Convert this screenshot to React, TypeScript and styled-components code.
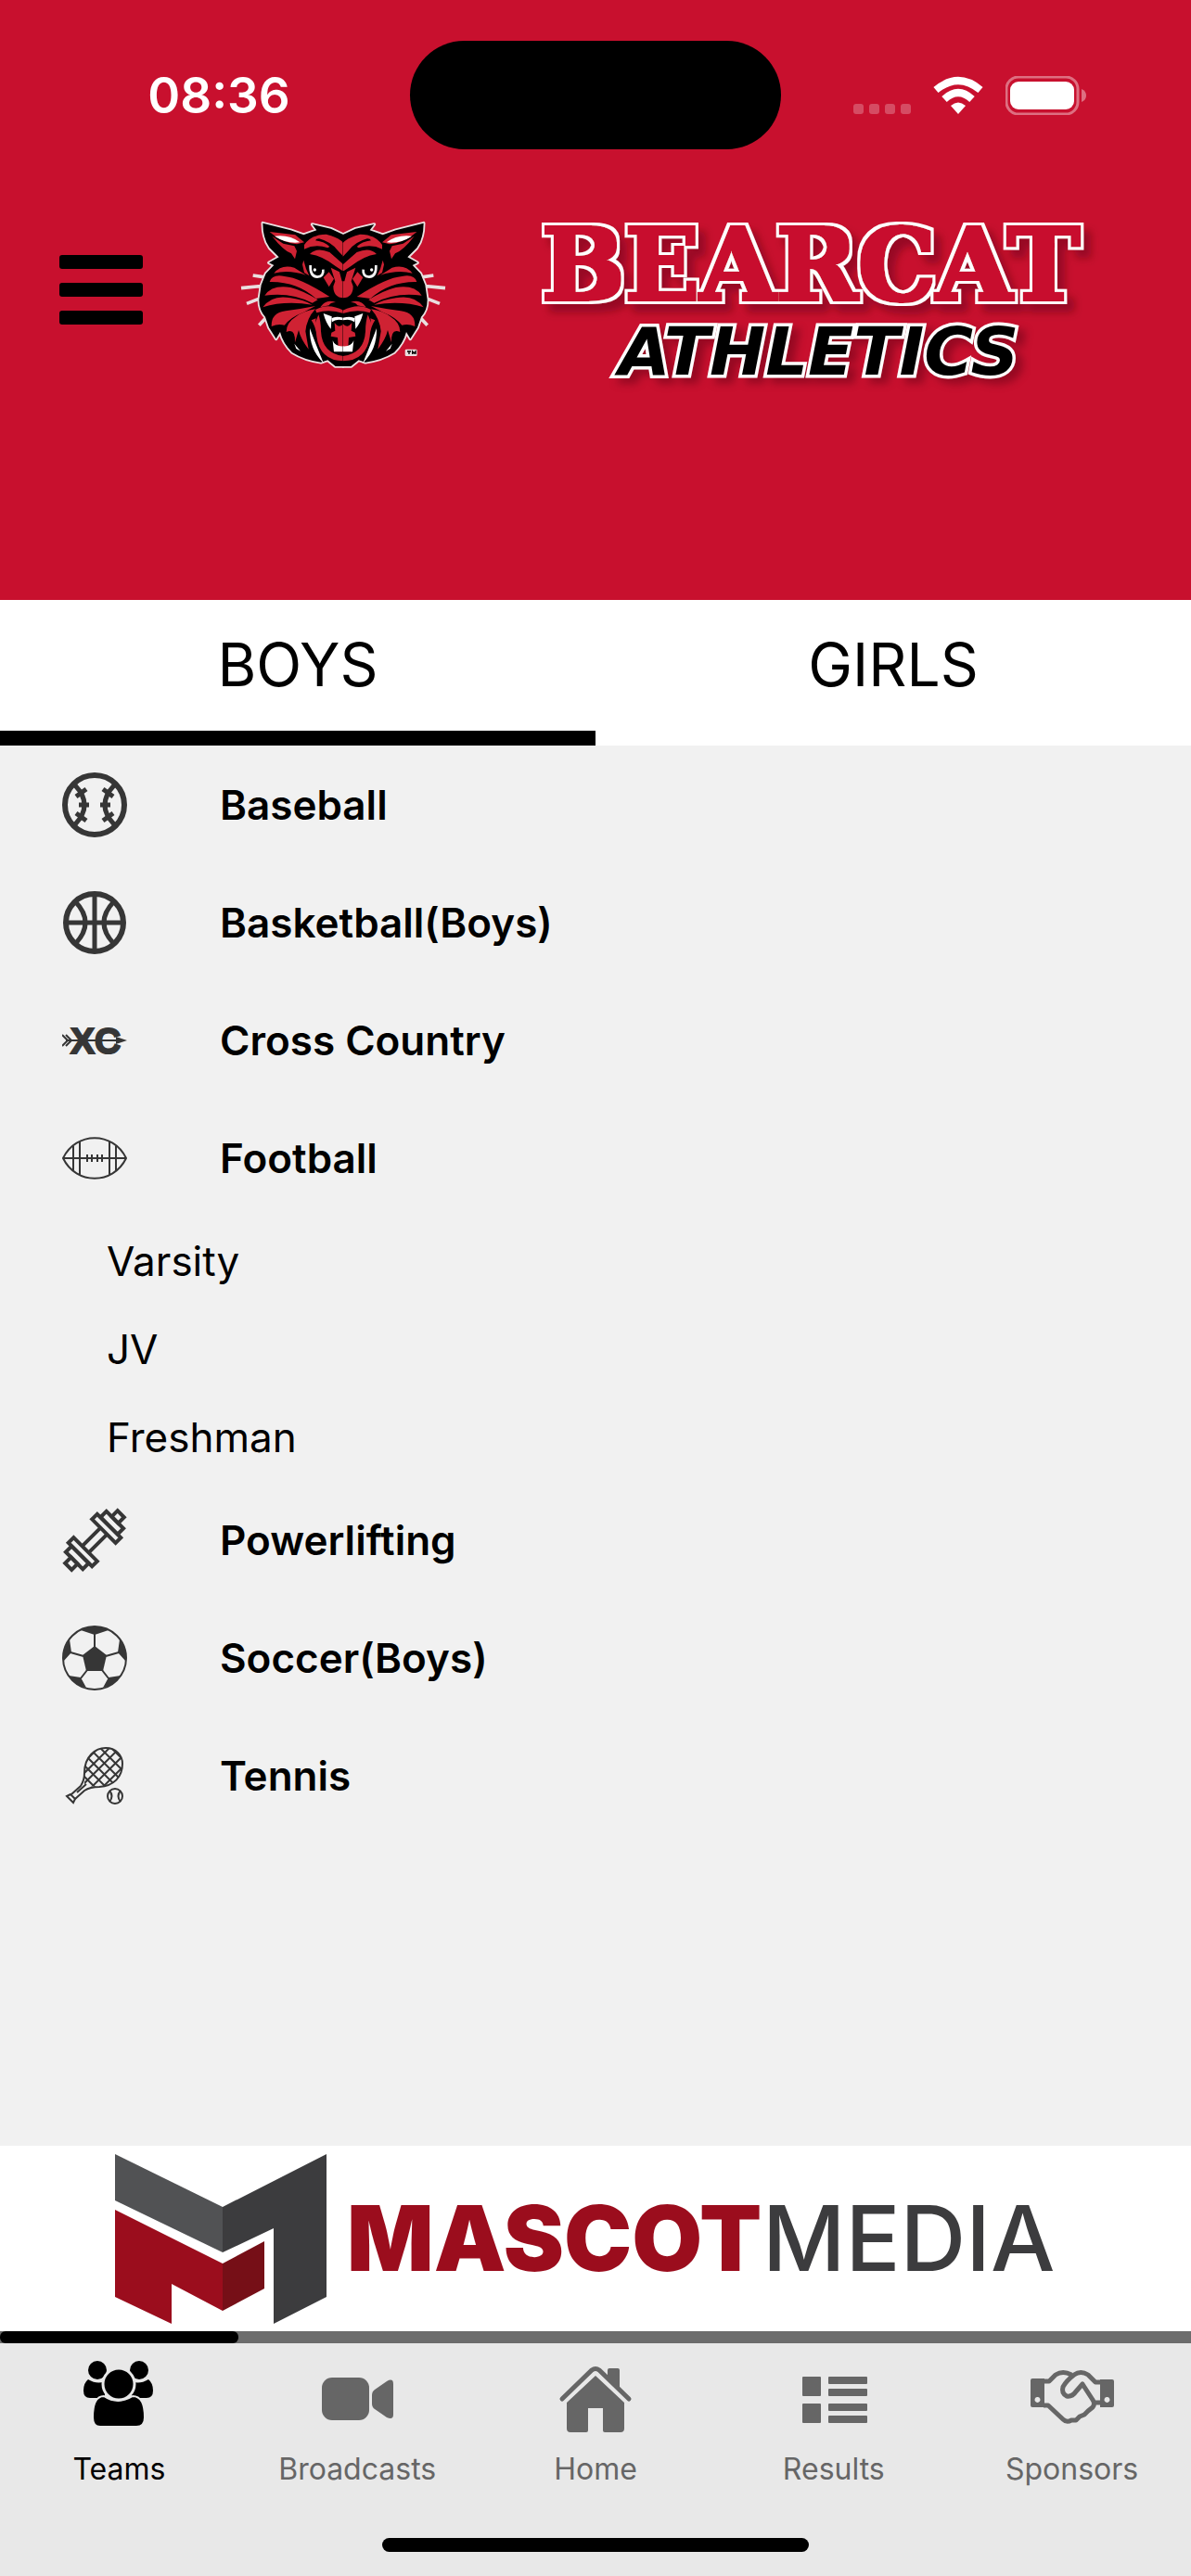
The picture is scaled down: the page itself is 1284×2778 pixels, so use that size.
import React, { useState } from "react";
import styled, { createGlobalStyle } from "styled-components";

const RED = "#c8102e";
const INK = "#363636";

const BearcatLogo = () => {
  const half = (
    <>
      <path
        d="M392 100L350 80L290 66L304 85L262 100L220 85L130 62Q130 112 152 142L182 172L150 190L166 198L140 225L125 262L118 310Q118 345 138 365L150 400L173 436L186 414Q195 450 225 480Q265 505 318 512L340 505L365 525H392Z"
        fill="#000"
      />
      <g fill="#cf2233">
        <path d="M152 90L235 100L264 124L240 130Q190 124 152 90Z" />
        <path d="M160 104L196 128L232 136L240 152L234 178L222 160Q196 150 160 104Z" />
        <path d="M264 132Q288 98 335 98Q375 108 391 126V170L372 150Q350 122 312 112Q302 112 300 118Q330 122 346 138L340 142Q300 128 264 146Z" />
        <path d="M282 162Q304 138 346 156L380 186L391 196V218L366 202Q324 168 282 162Z" />
        <path d="M262 182L270 210L280 232L264 222L258 196Z" />
        <path d="M350 206L378 220L386 250H391V304Q358 302 358 266L364 250Z" />
        <path d="M326 238L344 220L360 242L344 268Z" />
        <path d="M166 224Q190 194 232 206L270 230Q214 212 166 224Z" />
        <path d="M152 252Q160 226 200 234Q250 238 346 300L302 306Q240 250 152 252Z" />
        <path d="M136 296Q160 260 220 270Q260 280 308 310L290 320Q220 284 136 296Z" />
        <path d="M130 334Q160 292 220 304Q262 310 290 326Q200 312 130 334Z" />
        <path d="M158 396Q156 352 204 346Q250 340 300 330L262 350Q220 366 200 392Q180 386 158 396Z" />
        <path d="M206 414Q206 384 238 364Q262 346 300 340Q272 370 268 412L278 470Q252 436 246 408L234 448Q236 400 206 414Z" />
        <path d="M300 342Q340 318 391 344V354Q344 338 304 352Z" />
        <path d="M316 334Q334 306 366 318Q350 318 344 328Z" />
        <path d="M287 376L302 370L300 384L310 358Q318 380 318 412Q322 484 391 492V508Q314 506 304 428Q302 398 287 376Z" />
        <path d="M352 416L364 410L362 384Q376 404 391 388V462H374L372 432L350 428Z" />
      </g>
      <g fill="#fff">
        <path d="M168 104Q216 98 250 124Q208 130 168 104Z" />
        <path d="M326 354L353 364L350 404Q334 386 326 354Z" />
        <path d="M352 370Q364 362 391 368V376Q366 370 354 382Z" />
        <path d="M356 442Q364 462 391 460V478H360Z" />
        <path d="M282 402Q280 470 326 514Q296 440 282 402Z" />
        <path d="M232 452L252 476L238 468Z" />
      </g>
      <path
        d="M284 198Q282 234 306 236Q328 234 325 212"
        fill="none"
        stroke="#f2f2f2"
        strokeWidth="8"
      />
      <circle cx="298" cy="213" r="5" fill="#fff" />
    </>
  );

  const outline = (
    <path
      d="M392 100L350 80L290 66L304 85L262 100L220 85L130 62Q130 112 152 142L182 172L150 190L166 198L140 225L125 262L118 310Q118 345 138 365L150 400L173 436L186 414Q195 450 225 480Q265 505 318 512L340 505L365 525H392M146 238L98 231M140 264L60 272M124 304L78 322M140 368L118 392"
      fill="none"
      stroke="#eadfe0"
      strokeWidth="11"
      strokeLinejoin="round"
    />
  );

  return (
    <SBearcat viewBox="0 0 780 600" role="img" aria-label="Bearcat">
      {outline}
      <g transform="translate(780 0) scale(-1 1)">{outline}</g>
      {half}
      <g transform="translate(780 0) scale(-1 1)">{half}</g>
      <path d="M378 216H402L390 250Z" fill="#000" />
      <path d="M368 304Q390 318 412 304L390 334Z" fill="#000" />
      <rect x="590" y="470" width="39" height="22" rx="4" fill="#eadfe0" />
      <path d="M597 477h12m-6 0v9m11 0v-9l5 6l5-6v9" fill="none" stroke="#000" strokeWidth="4" />
    </SBearcat>
  );
};

const Wordmark = () => (
  <SWordmark viewBox="0 0 640 200" role="img" aria-label="Bearcat Athletics">
    <defs>
      {/* thickens the slab letters, then rings them in white over a soft shadow */}
      <filter id="slab" x="-5%" y="-10%" width="112%" height="130%">
        <feMorphology in="SourceGraphic" operator="dilate" radius="2" result="fat" />
        <feMorphology in="SourceAlpha" operator="dilate" radius="5" result="ring" />
        <feFlood floodColor="#fff" />
        <feComposite in2="ring" operator="in" result="white" />
        <feDropShadow
          in="white"
          dx="8"
          dy="9"
          stdDeviation="4"
          floodColor="#5a0014"
          floodOpacity="0.45"
          result="shadow"
        />
        <feMerge>
          <feMergeNode in="shadow" />
          <feMergeNode in="fat" />
        </feMerge>
      </filter>
    </defs>
    <SBearcatText x="24" y="103" filter="url(#slab)">
      BEARCAT
    </SBearcatText>
    <SAthleticsText x="107" y="184">
      ATHLETICS
    </SAthleticsText>
  </SWordmark>
);

const MascotMedia = () => (
  <SMascot viewBox="0 0 1040 190" role="img" aria-label="Mascot Media">
    <path d="M2 4L118 61V110L2 54Z" fill="#515254" />
    <path d="M118 61L230 4V158L173 187V84L118 110Z" fill="#3c3c3e" />
    <path d="M2 64L118 122V173L63 144V187L2 158Z" fill="#9b0d1d" />
    <path d="M118 122L163 98V149L118 173Z" fill="#760f17" />
    <SMascotText x="252" y="130">
      MASCOT
    </SMascotText>
    <SMediaText x="700" y="130">
      MEDIA
    </SMediaText>
  </SMascot>
);

const BaseballIcon = () => (
  <SSportIcon viewBox="0 0 70 70">
    <g fill="none" stroke={INK} strokeWidth="5">
      <circle cx="35" cy="35" r="32" strokeWidth="6" />
      <path d="M14 14Q34 35 14 56M56 14Q36 35 56 56" />
      <path d="M15 26L26 18M18 35H29M15 44L26 52M55 26L44 18M52 35H41M55 44L44 52" />
    </g>
  </SSportIcon>
);

const BasketballIcon = () => (
  <SSportIcon viewBox="0 0 70 70">
    <g fill="none" stroke={INK} strokeWidth="5">
      <circle cx="35" cy="35" r="31" strokeWidth="6" />
      <path d="M35 4V66M4 35H66M14 12Q36 35 14 58M56 12Q34 35 56 58" />
    </g>
  </SSportIcon>
);

const CrossCountryIcon = () => (
  <SSportIcon viewBox="0 0 70 70">
    <path
      d="M4 35H62M0 29L6 35L0 41M4 29L10 35L4 41"
      fill="none"
      stroke={INK}
      strokeWidth="2"
    />
    <path d="M58 31L70 35L58 39Z" fill={INK} />
    <SCrossText x="9" y="49">
      XC
    </SCrossText>
  </SSportIcon>
);

const FootballIcon = () => (
  <SSportIcon viewBox="0 0 70 70">
    <g fill="none" stroke={INK} strokeWidth="2">
      <path d="M1 35C15 6 55 6 69 35C55 64 15 64 1 35Z" />
      <path d="M1 35H69M12 22V48M19 17V53M51 17V53M58 22V48" />
      <path d="M27 31V39M32 31V39M38 31V39M43 31V39" />
    </g>
  </SSportIcon>
);

const DumbbellIcon = () => (
  <SSportIcon viewBox="0 0 70 70">
    <g
      fill="none"
      stroke={INK}
      strokeWidth="4"
      transform="translate(35 35) rotate(-45)"
    >
      <path d="M-14 -5H14M-14 5H14" />
      <path d="M14 -18H22V18H14ZM-14 -18H-22V18H-14Z" />
      <path d="M22 -13H31V13H22ZM-22 -13H-31V13H-22Z" />
      <path d="M31 -5H40V5H31ZM-31 -5H-40V5H-31Z" />
    </g>
  </SSportIcon>
);

const SoccerIcon = () => (
  <SSportIcon viewBox="0 0 70 70">
    <circle cx="35" cy="35" r="34" fill="none" stroke={INK} strokeWidth="2" />
    <g fill={INK}>
      <path d="M35 22L48 32L44 49H26L22 32Z" />
      <path d="M20 5Q35 -3 50 5L35 10Z" />
      <path d="M8 15L10 29L1 39Q0 26 8 15ZM62 15L60 29L69 39Q70 26 62 15Z" />
      <path d="M7 54L20 56L26 67Q14 65 7 54ZM63 54L50 56L44 67Q56 65 63 54Z" />
    </g>
    <path
      d="M35 9V23M9 29L23 33M61 29L47 33M27 48L20 57M43 48L50 57"
      stroke={INK}
      strokeWidth="2"
    />
  </SSportIcon>
);

const TennisIcon = () => (
  <SSportIcon viewBox="0 0 70 70">
    <defs>
      <clipPath id="racket">
        <path d="M24 32C24 14 36 5 47 5C58 5 65 13 65 22C65 36 56 46 40 47L24 46Z" />
      </clipPath>
    </defs>
    <g fill="none" stroke={INK} strokeWidth="2">
      <path d="M10 55L20 46Q24 40 24 32C24 14 36 5 47 5C58 5 65 13 65 22C65 36 56 46 40 47Q30 47 24 51L14 60" />
      <path d="M16 53L26 44M5 57L9 55L14 60L12 64Z" />
      <path
        clipPath="url(#racket)"
        d="M10 22L50 62M16 16L60 60M21 9L66 54M28 4L72 48M36 0L72 36M46 -2L76 28M10 34L50 -6M10 46L60 -4M14 53L68 -1M22 57L74 5M30 61L76 15"
      />
      <circle cx="57" cy="57" r="8" />
      <path d="M51 51Q56 57 51 63M63 51Q58 57 63 63" />
    </g>
  </SSportIcon>
);

const TeamsIcon = () => (
  <SNavIcon viewBox="0 0 90 90">
    <g fill="currentColor">
      <circle cx="22" cy="14" r="10" />
      <circle cx="67" cy="14" r="10" />
      <path d="M12 24Q22 30 30 26V44H14Q7 44 7 36Q7 28 12 24ZM77 24Q67 30 59 26V44H75Q82 44 82 36Q82 28 77 24Z" />
      <path
        d="M29 42Q44 52 60 42Q73 42 73 65Q73 75 64 75H25Q17 75 17 65Q17 42 29 42Z"
        stroke="#e8e8e8"
        strokeWidth="2"
      />
      <circle cx="45" cy="29" r="17" stroke="#e8e8e8" strokeWidth="3" />
    </g>
  </SNavIcon>
);

const BroadcastsIcon = () => (
  <SNavIcon viewBox="0 0 90 90">
    <g fill="currentColor">
      <rect x="7" y="22" width="51" height="46" rx="11" />
      <path d="M77 26Q84 22 84 29V62Q84 68 77 65L64 56Q61 54 61 50V41Q61 37 64 35Z" />
    </g>
  </SNavIcon>
);

const HomeIcon = () => (
  <SNavIcon viewBox="0 0 90 90">
    <path
      d="M9 45L41 14Q45 11 49 14L81 45"
      fill="none"
      stroke="currentColor"
      strokeWidth="5"
      strokeLinecap="round"
    />
    <g fill="currentColor">
      <path d="M58 22V14Q58 12 60 12H69Q71 12 71 14V35Z" />
      <path d="M45 20L76 49V77Q76 81 72 81H55Q53 81 53 79V55H37V79Q37 81 35 81H18Q14 81 14 77V49Z" />
    </g>
  </SNavIcon>
);

const ResultsIcon = () => (
  <SNavIcon viewBox="0 0 90 90">
    <g fill="currentColor">
      <rect x="11" y="21" width="20" height="21" rx="1" />
      <rect x="11" y="50" width="20" height="21" rx="1" />
      <rect x="39" y="21" width="42" height="8" rx="1" />
      <rect x="39" y="34" width="42" height="8" rx="1" />
      <rect x="39" y="50" width="42" height="8" rx="1" />
      <rect x="39" y="63" width="42" height="8" rx="1" />
    </g>
  </SNavIcon>
);

const SponsorsIcon = () => (
  <SNavIcon viewBox="0 0 90 90">
    <path
      d="M14 26H20L27 19Q35 14 44 19M76 27H70L62 19Q54 14 47 19Q39 25 35 32Q33 39 39 42Q45 43 49 37L56 29L67 46Q70 50 67 54L62 58L58 62L53 64L49 68L44 68Q39 71 35 67L19 52H14M69 49H76"
      fill="none"
      stroke="currentColor"
      strokeWidth="5"
      strokeLinejoin="round"
    />
    <path
      d="M2 23H15V54H2Q0 54 0 52V25Q0 23 2 23ZM7 43a3 3 0 1 0 1 0ZM75 24H88Q90 24 90 26V52Q90 54 88 54H75ZM82 43a3 3 0 1 0 1 0Z"
      fill="currentColor"
      fillRule="evenodd"
    />
  </SNavIcon>
);

const sports = [
  { name: "Baseball", Icon: BaseballIcon },
  { name: "Basketball(Boys)", Icon: BasketballIcon },
  { name: "Cross Country", Icon: CrossCountryIcon },
  { name: "Football", Icon: FootballIcon, levels: ["Varsity", "JV", "Freshman"] },
  { name: "Powerlifting", Icon: DumbbellIcon },
  { name: "Soccer(Boys)", Icon: SoccerIcon },
  { name: "Tennis", Icon: TennisIcon },
];

const navItems = [
  { name: "Teams", Icon: TeamsIcon },
  { name: "Broadcasts", Icon: BroadcastsIcon },
  { name: "Home", Icon: HomeIcon },
  { name: "Results", Icon: ResultsIcon },
  { name: "Sponsors", Icon: SponsorsIcon },
];

const App = () => {
  const [tab, setTab] = useState("BOYS");
  const [page, setPage] = useState("Teams");

  return (
    <SPage>
      <GlobalStyle />
      <SHeader>
        <SStatusBar>
          <STime>08:36</STime>
          <SIsland />
          <SStatusIcons>
            <svg width="62" height="42" viewBox="0 0 62 42">
              <g fill="#fff" opacity="0.25">
                <rect x="0" y="30" width="11" height="11" rx="3" />
                <rect x="17" y="30" width="11" height="11" rx="3" />
                <rect x="34" y="30" width="11" height="11" rx="3" />
                <rect x="51" y="30" width="11" height="11" rx="3" />
              </g>
            </svg>
            <svg width="54" height="42" viewBox="0 0 54 42">
              <g fill="none" stroke="#fff" strokeWidth="8">
                <path d="M3 15Q27 -5 51 15" />
                <path d="M12 25Q27 11 42 25" />
              </g>
              <path d="M27 41L19 32Q27 25 35 32Z" fill="#fff" />
            </svg>
            <svg width="87" height="42" viewBox="0 0 87 42">
              <rect
                x="1"
                y="1"
                width="77"
                height="40"
                rx="13"
                fill="none"
                stroke="#fff"
                strokeWidth="3"
                opacity="0.4"
              />
              <rect x="5" y="6" width="69" height="30" rx="9" fill="#fff" />
              <path d="M82 14Q87 16 87 21Q87 26 82 28Z" fill="#fff" opacity="0.4" />
            </svg>
          </SStatusIcons>
        </SStatusBar>
        <SBrand>
          <SMenuButton aria-label="Menu">
            <svg width="90" height="76" viewBox="0 0 90 76">
              <rect y="0" width="90" height="15" rx="3" />
              <rect y="30" width="90" height="15" rx="3" />
              <rect y="60" width="90" height="15" rx="3" />
            </svg>
          </SMenuButton>
          <BearcatLogo />
          <Wordmark />
        </SBrand>
      </SHeader>

      <STabs role="tablist">
        {["BOYS", "GIRLS"].map((name) => (
          <STab
            key={name}
            role="tab"
            aria-selected={tab === name}
            $active={tab === name}
            onClick={() => setTab(name)}
          >
            {name}
          </STab>
        ))}
      </STabs>

      <SMain>
        {sports.map(({ name, Icon, levels }) => (
          <React.Fragment key={name}>
            <SSportRow>
              <Icon />
              {name}
            </SSportRow>
            {levels?.map((level) => (
              <SLevelRow key={level}>{level}</SLevelRow>
            ))}
          </React.Fragment>
        ))}
      </SMain>

      <SSponsorBanner>
        <MascotMedia />
      </SSponsorBanner>

      <SProgress>
        <SProgressBar />
      </SProgress>
      <SNav>
        {navItems.map(({ name, Icon }) => (
          <SNavButton
            key={name}
            $active={page === name}
            onClick={() => setPage(name)}
          >
            <Icon />
            {name}
          </SNavButton>
        ))}
      </SNav>
      <SHomeArea>
        <SHomeIndicator />
      </SHomeArea>
    </SPage>
  );
};

export default App;

const GlobalStyle = createGlobalStyle`
  * {
    box-sizing: border-box;
  }
  body {
    margin: 0;
    font-family: Inter, "Liberation Sans", sans-serif;
    color: #000;
  }
  button {
    margin: 0;
    padding: 0;
    border: 0;
    background: none;
    font: inherit;
    color: inherit;
    cursor: pointer;
  }
  svg {
    display: block;
    flex-shrink: 0;
  }
`;

const SPage = styled.div`
  display: flex;
  flex-direction: column;
  min-height: 100vh;
  background: #f1f1f1;
`;

const SHeader = styled.header`
  padding-bottom: 227px;
  background: ${RED};
`;
const SStatusBar = styled.div`
  display: grid;
  grid-template-columns: 1fr 400px 1fr;
  align-items: center;
  padding: 44px 0 59px;
`;
const STime = styled.span`
  padding-left: 30px;
  text-align: center;
  color: #fff;
  font-weight: 600;
  font-size: 53px;
  line-height: 64px;
`;
const SIsland = styled.div`
  height: 117px;
  border-radius: 60px;
  background: #000;
`;
const SStatusIcons = styled.div`
  display: flex;
  justify-content: flex-end;
  gap: 24px;
  padding-right: 113px;
`;

const SBrand = styled.div`
  display: flex;
  align-items: center;
  padding: 0 64px;
`;
const SMenuButton = styled.button`
  margin-right: 86px;
  padding-bottom: 14px;
`;
const SBearcat = styled.svg`
  width: 260px;
  height: 200px;
  margin-right: 60px;
`;
const SWordmark = styled.svg`
  width: 640px;
  height: 200px;
  overflow: visible;
`;
const SBearcatText = styled.text`
  fill: ${RED};
  font-family: "DejaVu Serif", serif;
  font-weight: 700;
  font-size: 106px;
`;
const SAthleticsText = styled.text`
  fill: #000;
  stroke: #fff;
  stroke-width: 7px;
  paint-order: stroke;
  font-family: "DejaVu Sans", sans-serif;
  font-style: italic;
  font-weight: 700;
  font-size: 72px;
  filter: drop-shadow(8px 6px 4px rgba(90, 0, 20, 0.45));
`;

const STabs = styled.div`
  display: grid;
  grid-template-columns: 1fr 1fr;
  background: #fff;
`;
const STab = styled.button<{ $active: boolean }>`
  padding: 30px 0 31px;
  border-bottom: 16px solid ${({ $active }) => ($active ? "#000" : "#fff")};
  font-size: 64px;
  line-height: 80px;
`;

const SMain = styled.main`
  display: flex;
  flex-direction: column;
  flex: 1;
`;
const SSportRow = styled.button`
  display: flex;
  align-items: center;
  gap: 100px;
  height: 127px;
  padding: 0 67px;
  font-weight: 600;
  font-size: 44px;
`;
const SLevelRow = styled.button`
  height: 95px;
  padding: 0 115px;
  text-align: left;
  font-size: 44px;
`;
const SSportIcon = styled.svg`
  width: 70px;
  height: 70px;
`;
const SCrossText = styled.text`
  fill: ${INK};
  stroke: ${INK};
  stroke-width: 2px;
  font-family: "Liberation Sans", sans-serif;
  font-weight: 700;
  font-size: 39px;
`;

const SSponsorBanner = styled.div`
  display: flex;
  justify-content: center;
  padding: 5px 0;
  background: #fff;
`;
const SMascot = styled.svg`
  width: 1040px;
  height: 190px;
`;
const SMascotText = styled.text`
  fill: #9b0d1d;
  font-weight: 900;
  font-size: 98px;
`;
const SMediaText = styled.text`
  fill: #3c3c3e;
  font-weight: 500;
  font-size: 98px;
`;

const SProgress = styled.div`
  height: 13px;
  background: #6c6c6c;
`;
const SProgressBar = styled.div`
  width: 20%;
  height: 100%;
  border-radius: 6px;
  background: #000;
`;
const SNav = styled.nav`
  display: grid;
  grid-template-columns: repeat(5, 1fr);
  padding: 15px 0 54px;
  background: #e8e8e8;
`;
const SNavButton = styled.button<{ $active: boolean }>`
  display: flex;
  flex-direction: column;
  align-items: center;
  gap: 11px;
  color: ${({ $active }) => ($active ? "#000" : "#666")};
  font-size: 32px;
  line-height: 40px;
`;
const SNavIcon = styled.svg`
  width: 90px;
  height: 90px;
`;
const SHomeArea = styled.div`
  display: flex;
  justify-content: center;
  padding-bottom: 26px;
  background: #e8e8e8;
`;
const SHomeIndicator = styled.div`
  width: 460px;
  height: 15px;
  border-radius: 8px;
  background: #000;
`;
